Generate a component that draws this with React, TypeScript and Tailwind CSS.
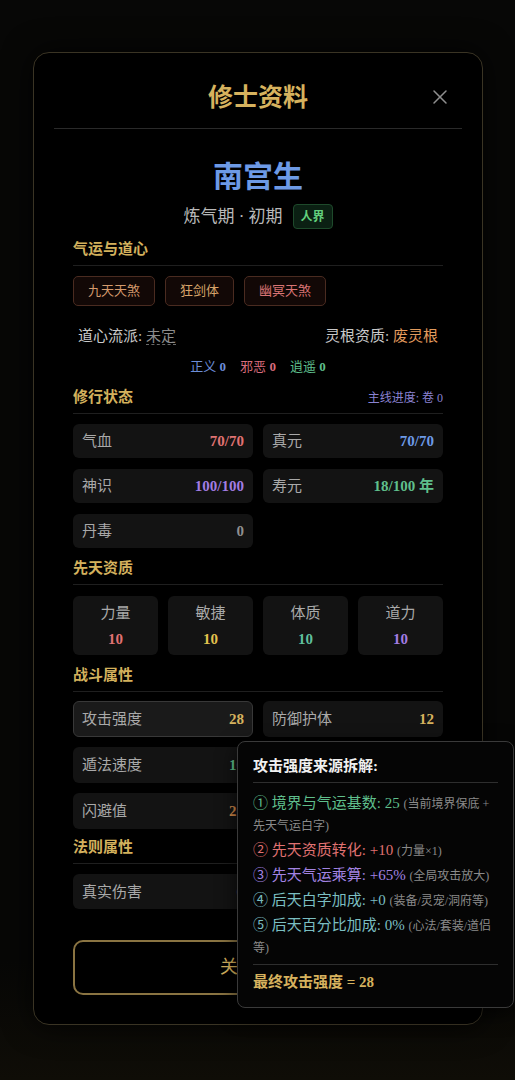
import { X } from "lucide-react";

type StatProps = { label: string; value: string; color: string; active?: boolean };

function SectionTitle({ title, right }: { title: string; right?: React.ReactNode }) {
  return (
    <div className="flex items-end justify-between border-b border-[#1f1f1f] pb-[6px]">
      <span className="text-[15px] leading-[20px] font-bold text-[#d3b15d]">{title}</span>
      {right}
    </div>
  );
}

function Stat({ label, value, color, active }: StatProps) {
  return (
    <div
      className={
        active
          ? "flex h-full items-center justify-between rounded-[6px] border border-[#383838] bg-[#1a1a1a] pl-[8px] pr-[8px]"
          : "flex h-full items-center justify-between rounded-[6px] bg-[#131313] pl-[9px] pr-[9px]"
      }
    >
      <span className="text-[15px] leading-[20px] text-[#a9a9a9]">{label}</span>
      <span className={`text-[15px] leading-[20px] font-bold ${color}`}>{value}</span>
    </div>
  );
}

function Attr({ label, value, color }: { label: string; value: string; color: string }) {
  return (
    <div className="flex h-[59px] flex-col items-center justify-center gap-[6px] rounded-[6px] bg-[#131313]">
      <span className="text-[15px] leading-[20px] text-[#a9a9a9]">{label}</span>
      <span className={`text-[15px] leading-[20px] font-bold ${color}`}>{value}</span>
    </div>
  );
}

function Tag({ text, color }: { text: string; color: string }) {
  return (
    <div className={`flex h-[30px] items-center rounded-[5px] border border-[#4a2b20] bg-[#120806] px-[14px] text-[13px] ${color}`}>
      {text}
    </div>
  );
}

function Note({ children }: { children: React.ReactNode }) {
  return <span className="text-[12px] leading-none text-[#8a8a8a]">{children}</span>;
}

export default function App() {
  return (
    <div className="relative h-[1080px] w-full overflow-hidden bg-[#070706] font-['Liberation_Serif','Noto_Sans_CJK_SC',serif]">
      <div className="pointer-events-none absolute inset-x-0 bottom-0 h-[120px] bg-gradient-to-t from-[#0f0d07] to-transparent" />
      <div className="relative px-[33px] pt-[52px]">
        <div className="relative w-[450px] rounded-[16px] border border-[#3a3424] bg-black pb-[29px] shadow-[0_0_30px_rgba(0,0,0,0.8)]">
          {/* Header */}
          <div className="relative mx-[20px] border-b border-[#2a2a2a] pb-[14px] pt-[29px] text-center">
            <span className="text-[25px] leading-[32px] font-bold text-[#d6b25e]">修士资料</span>
            <button className="absolute right-[10px] top-[32px] text-[#8e8e8e]">
              <X size={24} strokeWidth={1.5} />
            </button>
          </div>

          <div className="px-[39px]">
            {/* Name */}
            <div className="mt-[28px] text-center text-[30px] leading-[40px] font-bold text-[#6d9ae6]">南宫生</div>
            <div className="mt-[7px] flex h-[25px] items-center justify-center gap-[10px]">
              <span className="text-[17px] leading-[24px] text-[#b9b9b9]">炼气期 · 初期</span>
              <span className="flex h-[25px] items-center rounded-[4px] border border-[#1e4a2b] bg-[#0b2013] px-[7px] text-[12px] font-bold text-[#62cf7d]">
                人界
              </span>
            </div>

            {/* 气运与道心 */}
            <div className="mt-[10px]">
              <SectionTitle title="气运与道心" />
            </div>
            <div className="mt-[10px] flex gap-[10px]">
              <Tag text="九天天煞" color="text-[#d49a6c]" />
              <Tag text="狂剑体" color="text-[#d8a46a]" />
              <Tag text="幽冥天煞" color="text-[#d87474]" />
            </div>
            <div className="mt-[19px] flex items-center justify-between px-[5px] text-[15px] leading-[22px]">
              <span className="text-[#c9c9c9]">
                道心流派: <span className="border-b border-dashed border-[#6a6a6a] text-[#8c8c8c]">未定</span>
              </span>
              <span className="text-[#c9c9c9]">
                灵根资质: <span className="text-[#e29b5d]">废灵根</span>
              </span>
            </div>
            <div className="mt-[11px] flex items-center justify-center gap-[14px] text-[13px] leading-[18px]">
              <span className="text-[#6d8ed8]">
                正义 <span className="font-bold">0</span>
              </span>
              <span className="text-[#d86c7c]">
                邪恶 <span className="font-bold">0</span>
              </span>
              <span className="text-[#5fbf8c]">
                逍遥 <span className="font-bold">0</span>
              </span>
            </div>

            {/* 修行状态 */}
            <div className="mt-[11px]">
              <SectionTitle
                title="修行状态"
                right={<span className="text-[12px] leading-[18px] text-[#8a82d2]">主线进度: 卷 0</span>}
              />
            </div>
            <div className="mt-[10px] grid grid-cols-2 auto-rows-[34px] gap-x-[10px] gap-y-[11px]">
              <Stat label="气血" value="70/70" color="text-[#e07272]" />
              <Stat label="真元" value="70/70" color="text-[#6d9ae6]" />
              <Stat label="神识" value="100/100" color="text-[#a27ce2]" />
              <Stat label="寿元" value="18/100 年" color="text-[#5fbf8c]" />
              <Stat label="丹毒" value="0" color="text-[#8f8f8f]" />
            </div>

            {/* 先天资质 */}
            <div className="mt-[10px]">
              <SectionTitle title="先天资质" />
            </div>
            <div className="mt-[11px] grid grid-cols-4 gap-[10px]">
              <Attr label="力量" value="10" color="text-[#e07272]" />
              <Attr label="敏捷" value="10" color="text-[#e2c24e]" />
              <Attr label="体质" value="10" color="text-[#5fbf9c]" />
              <Attr label="道力" value="10" color="text-[#a27ce2]" />
            </div>

            {/* 战斗属性 */}
            <div className="mt-[10px]">
              <SectionTitle title="战斗属性" />
            </div>
            <div className="mt-[9px] grid grid-cols-2 auto-rows-[36px] gap-[10px]">
              <Stat label="攻击强度" value="28" color="text-[#d6b25e]" active />
              <Stat label="防御护体" value="12" color="text-[#d6b25e]" />
              <Stat label="遁法速度" value="10" color="text-[#5fbf8c]" />
              <Stat label="神识强度" value="10" color="text-[#a27ce2]" />
              <Stat label="闪避值" value="20" color="text-[#d48a4a]" />
              <Stat label="暴击率" value="5%" color="text-[#e07272]" />
            </div>

            {/* 法则属性 */}
            <div className="mt-[8px]">
              <SectionTitle title="法则属性" />
            </div>
            <div className="mt-[10px] grid grid-cols-2 auto-rows-[35px] gap-[10px]">
              <Stat label="真实伤害" value="0" color="text-[#8f8f8f]" />
              <Stat label="法则抗性" value="0" color="text-[#8f8f8f]" />
            </div>

            <button className="mt-[31px] flex h-[55px] w-full items-center justify-center rounded-[10px] border-2 border-[#8a7442] text-[18px] tracking-[20px] text-[#d6b25e]">
              关闭
            </button>
          </div>
        </div>
      </div>

      {/* Tooltip */}
      <div className="absolute left-[237px] top-[741px] w-[277px] rounded-[8px] border border-[#3a3a3a] bg-[#050505] px-[15px] pb-[15px] pt-[14px] shadow-[0_6px_20px_rgba(0,0,0,0.7)]">
        <div className="border-b border-[#2e2e2e] pb-[6px] text-[15px] leading-[20px] font-bold text-[#f0f0f0]">
          攻击强度来源拆解:
        </div>
        <div className="mt-[9px] flex flex-col gap-[3px] text-[15px] leading-[22px]">
          <div className="text-[#5fbf8c]">
            ① 境界与气运基数: 25 <Note>(当前境界保底 + 先天气运白字)</Note>
          </div>
          <div className="text-[#e07272]">
            ② 先天资质转化: +10 <Note>(力量×1)</Note>
          </div>
          <div className="text-[#a283e2]">
            ③ 先天气运乘算: +65% <Note>(全局攻击放大)</Note>
          </div>
          <div className="text-[#7bbfc2]">
            ④ 后天白字加成: +0 <Note>(装备/灵宠/洞府等)</Note>
          </div>
          <div className="text-[#7bbfc2]">
            ⑤ 后天百分比加成: 0% <Note>(心法/套装/道侣等)</Note>
          </div>
        </div>
        <div className="mt-[6px] border-t border-[#2e2e2e] pt-[7px] text-[15px] leading-[20px] font-bold text-[#d6b25e]">
          最终攻击强度 = 28
        </div>
      </div>
    </div>
  );
}
